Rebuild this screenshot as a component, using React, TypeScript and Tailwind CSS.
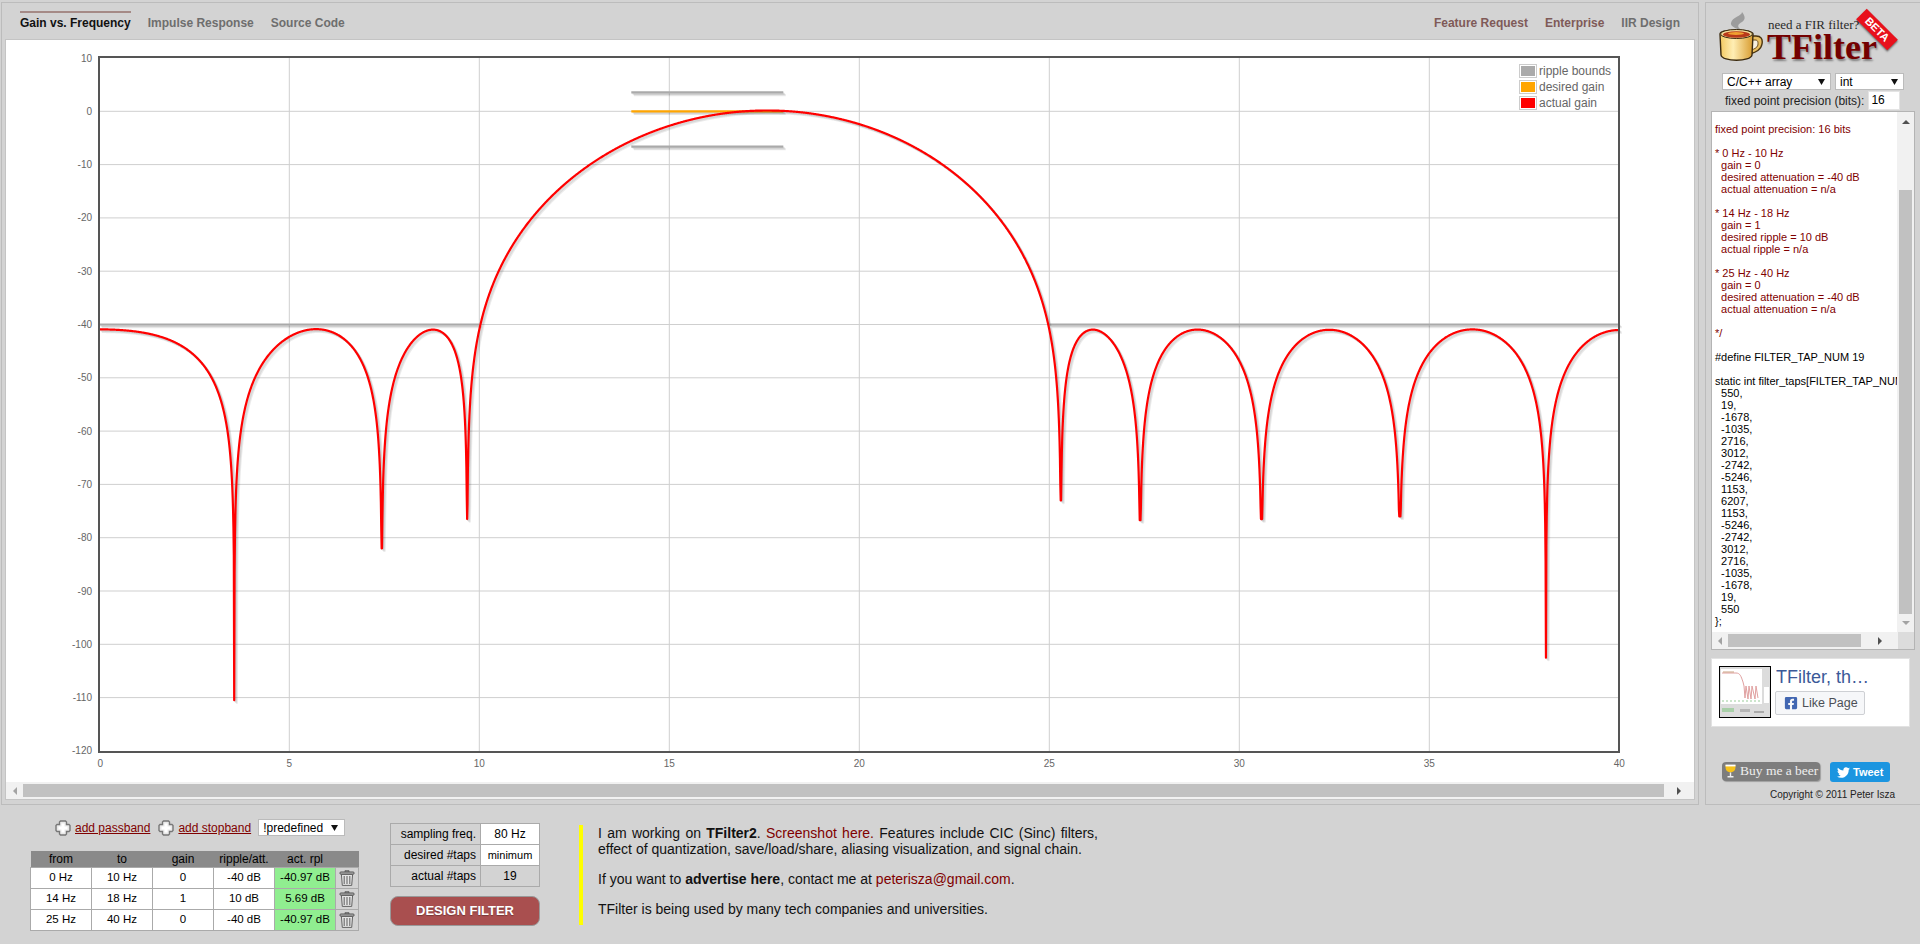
import React from "react";
import { FaTwitter, FaFacebookSquare } from "react-icons/fa";

const TAPS = [550, 19, -1678, -1035, 2716, 3012, -2742, -5246, 1153, 6207, 1153, -5246, -2742, 3012, 2716, -1035, -1678, 19, 550];
const NOTCHES: [number, number][] = [
  [3.57, -110.5], [7.46, -82], [9.67, -76.5], [25.33, -73], [27.4, -76.7], [30.6, -76.5], [34.3, -76], [38.0, -102.5],
];
const X = (f: number) => 99.3 + 38 * f;
const Y = (db: number) => 111.3 - 5.33 * db;

function curve() {
  const dbs: number[] = [];
  for (let i = 0; i <= 4000; i++) {
    const f = i * 0.01;
    let s = 0;
    TAPS.forEach((h, n) => {
      s += h * Math.cos((2 * Math.PI * f * (n - 9)) / 80);
    });
    dbs.push(20 * Math.log10(Math.abs(s) / 32768 + 1e-9));
  }
  NOTCHES.forEach(([nf, nd]) => {
    const c = Math.round(nf * 100);
    let m = c;
    for (let i = c - 30; i <= c + 30; i++) if (dbs[i] < dbs[m]) m = i;
    for (let i = c - 30; i <= c + 30; i++) dbs[i] = Math.max(dbs[i], nd);
    dbs[m] = nd;
  });
  return "M" + dbs.map((d, i) => `${X(i * 0.01).toFixed(2)},${Y(d).toFixed(2)}`).join("L");
}
const CURVE = curve();

const SHADOW = [1, 2, 3];

function Lines({ d, color, w }: { d: string; color: string; w: number }) {
  return (
    <g fill="none" strokeLinejoin="round">
      {SHADOW.map((j) => (
        <path key={j} d={d} stroke="#000" strokeOpacity={0.08} strokeWidth={w} transform={`translate(${0.88 * j} ${0.88 * j})`} />
      ))}
      <path d={d} stroke={color} strokeWidth={w} />
    </g>
  );
}

function Chart() {
  const ys = Array.from({ length: 14 }, (_, i) => 10 - i * 10);
  const xs = Array.from({ length: 9 }, (_, i) => i * 5);
  return (
    <svg viewBox="6 40 1687 742" className="block w-[1687px] h-[742px]">
      <rect x="6" y="40" width="1687" height="742" fill="#fff" />
      {ys.map((v) => (
        <g key={v}>
          {v !== 10 && v !== -120 && <line x1="100" x2="1618" y1={Y(v)} y2={Y(v)} stroke="#cfcfcf" strokeWidth="1" />}
          <text x="92" y={Y(v) + 3.5} textAnchor="end" fontSize="10" fill="#666">{v}</text>
        </g>
      ))}
      {xs.map((v) => (
        <g key={v}>
          {v !== 0 && v !== 40 && <line x1={X(v)} x2={X(v)} y1="58" y2="751" stroke="#cfcfcf" strokeWidth="1" />}
          <text x={X(v) + (v === 0 ? 1 : 0)} y="766.5" textAnchor="middle" fontSize="10" fill="#666">{v}</text>
        </g>
      ))}
      <Lines d={`M${X(0)},${Y(-40)}L${X(10)},${Y(-40)}`} color="#aaa" w={2.2} />
      <Lines d={`M${X(25)},${Y(-40)}L${X(40)},${Y(-40)}`} color="#aaa" w={2.2} />
      <Lines d={`M${X(14)},92.4L${X(18)},92.4`} color="#aaa" w={2.2} />
      <Lines d={`M${X(14)},146.6L${X(18)},146.6`} color="#aaa" w={2.2} />
      <Lines d={`M${X(14)},111.3L${X(18)},111.3`} color="#ffa500" w={2.2} />
      <Lines d={CURVE} color="#f00" w={2.2} />
      <rect x="99" y="57" width="1520" height="695" fill="none" stroke="#555" strokeWidth="2" />
      {[
        ["#aaa", "ripple bounds", 64],
        ["#ffa500", "desired gain", 80],
        ["#f00", "actual gain", 96],
      ].map(([c, t, y]) => (
        <g key={t as string}>
          <rect x="1519.5" y={(y as number) + 0.5} width="17" height="13" fill="#fff" stroke="#ccc" />
          <rect x="1521" y={(y as number) + 2} width="14" height="10" fill={c as string} />
          <text x="1539" y={(y as number) + 11} fontSize="12" fill="#666">{t}</text>
        </g>
      ))}
    </svg>
  );
}

function Tri({ dir, color = "#505050" }: { dir: "l" | "r" | "u" | "d"; color?: string }) {
  const p = { l: "5,0 5,8 1,4", r: "1,0 1,8 5,4", u: "0,5 8,5 4,1", d: "0,1 8,1 4,5" }[dir];
  const box = dir === "l" || dir === "r" ? "w-[6px] h-[8px]" : "w-[8px] h-[6px]";
  const vb = dir === "l" || dir === "r" ? "0 0 6 8" : "0 0 8 6";
  return (
    <svg viewBox={vb} className={box}>
      <polygon points={p} fill={color} />
    </svg>
  );
}

function Caret() {
  return (
    <svg viewBox="0 0 7 6" className="w-[7px] h-[6px] shrink-0">
      <polygon points="0,0 7,0 3.5,6" fill="#111" />
    </svg>
  );
}

function Plus() {
  return (
    <svg viewBox="0 0 16 16" className="w-[16px] h-[16px] shrink-0">
      <path d="M5.5 1h5l1 1v2.5H14l1 1v5l-1 1h-2.500V14l-1 1h-5l-1-1v-2.500H2l-1-1v-5l1-1h2.500V2z" fill="#e8e8e8" stroke="#777" strokeWidth="1.4" />
      <path d="M6.5 3.5h3v3h3v3h-3v3h-3v-3h-3v-3h3z" fill="#fff" />
    </svg>
  );
}

function Trash() {
  return (
    <svg viewBox="0 0 16 16" className="w-[16px] h-[16px]">
      <path d="M6 .6h4v1.6H6z" fill="#aaa" stroke="#555" strokeWidth=".7" />
      <rect x="1" y="2" width="14" height="2.2" rx=".8" fill="#bbb" stroke="#444" strokeWidth=".9" />
      <path d="M2.4 4.4h11.2l-.9 11H3.3z" fill="#e4e4e4" stroke="#555" strokeWidth=".9" />
      <path d="M5.2 6v8M8 6v8M10.8 6v8" stroke="#6a6a6a" strokeWidth="1.1" />
    </svg>
  );
}

function Mug() {
  return (
    <svg viewBox="0 0 44 50" className="w-[44px] h-[50px] shrink-0">
      <defs>
        <linearGradient id="mugb" x1="0" x2="1" y1="0" y2="0">
          <stop offset="0" stopColor="#f2c860" />
          <stop offset=".4" stopColor="#ffeeb4" />
          <stop offset="1" stopColor="#d89c30" />
        </linearGradient>
      </defs>
      <path d="M23 18c-6-3-4-6 0-8 3-2 4-5 0-10 0 4-10 5-11 11-1 3 5 6 11 7z" fill="#9c9c9c" />
      <path d="M31 24h6c5 0 7 3 6 8-1 6-6 8-12 10z" fill="#e9bf62" stroke="#4a3410" strokeWidth="1.4" />
      <path d="M32 28h4c3 0 3 2 3 4 0 3-3 5-7 6z" fill="#f7f0e0" stroke="#6a4a18" strokeWidth="1" />
      <path d="M1 22c0-5 32-5 33 0l-1 21c-1 7-30 7-31 0z" fill="url(#mugb)" stroke="#3a2a10" strokeWidth="1.4" />
      <ellipse cx="17.5" cy="22" rx="16" ry="4.5" fill="#f3dc9a" stroke="#3a2a10" strokeWidth="1" />
      <ellipse cx="17.5" cy="22.5" rx="13.5" ry="3.2" fill="#b8391a" />
      <ellipse cx="17" cy="21.5" rx="8" ry="1.4" fill="#f0a030" />
    </svg>
  );
}

function Beer() {
  return (
    <svg viewBox="0 0 11 15" className="w-[11px] h-[15px] shrink-0">
      <path d="M.5 1h10c0 4 0 6.500-5 7.500-5-1-5-3.500-5-7.500z" fill="#f6c21a" />
      <path d="M.5 .6h10v1.800H.5z" fill="#fff" />
      <path d="M4.800 8.500h1.400v3.500H4.800zM2.500 12h6v1.600h-6z" fill="#eee" />
    </svg>
  );
}

function Thumb() {
  return (
    <svg viewBox="0 0 50 50" className="block w-[52px] h-[52px] border border-black shrink-0">
      <rect width="50" height="50" fill="#dcdcdc" />
      <rect x="1" y="2" width="41" height="35" fill="#fff" />
      <rect x="44" y="20" width="5" height="16" fill="#fff" />
      <path d="M2 6h14c4 0 5 3 7 9l1 4 1 12 1-12 2 13 1-13 2 13 1-13 3 13 1-13 2 12" fill="none" stroke="#e0a0a0" strokeWidth="1" />
      <path d="M3 5h11" stroke="#c9a080" strokeWidth="1" />
      <path d="M2 34h40" stroke="#9c9" strokeWidth="1" strokeDasharray="2 2" />
      <rect x="2" y="41" width="12" height="4" fill="#a8cfa8" />
      <rect x="20" y="42" width="10" height="3" fill="#b5b5b5" />
      <rect x="34" y="44" width="10" height="2" fill="#aaa" />
    </svg>
  );
}

const RED_CODE = `fixed point precision: 16 bits

* 0 Hz - 10 Hz
  gain = 0
  desired attenuation = -40 dB
  actual attenuation = n/a

* 14 Hz - 18 Hz
  gain = 1
  desired ripple = 10 dB
  actual ripple = n/a

* 25 Hz - 40 Hz
  gain = 0
  desired attenuation = -40 dB
  actual attenuation = n/a

*/
`;
const BLACK_CODE = `
#define FILTER_TAP_NUM 19

static int filter_taps[FILTER_TAP_NUM] = {
${TAPS.map((t) => "  " + t).join(",\n")}
};`;

const ROWS = [
  ["0 Hz", "10 Hz", "0", "-40 dB", "-40.97 dB"],
  ["14 Hz", "18 Hz", "1", "10 dB", "5.69 dB"],
  ["25 Hz", "40 Hz", "0", "-40 dB", "-40.97 dB"],
];

export default function App() {
  return (
    <div className="w-[1920px] h-[944px] bg-[#d3d3d3] overflow-hidden font-['Liberation_Sans',Arial,sans-serif] text-black flex flex-col">
      <div className="flex pt-[2px] pl-[1px] h-[805px] shrink-0">
        {/* left panel */}
        <div className="w-[1698px] h-[803px] border border-[#bcbcbc] px-[3px] pb-[4px] flex flex-col">
          <div className="h-[36px] flex justify-between pl-[15px] pr-[15px] pt-[8px] text-[12px] font-bold leading-[20px] shrink-0">
            <div className="flex gap-[17px] items-start">
              <span className="border-t-2 border-[#a58a86] text-[#111]">Gain vs. Frequency</span>
              <span className="border-t-2 border-transparent text-[#6e6e6e]">Impulse Response</span>
              <span className="border-t-2 border-transparent text-[#6e6e6e]">Source Code</span>
            </div>
            <div className="flex gap-[17px] items-start">
              <span className="border-t-2 border-transparent text-[#7f5a58]">Feature Request</span>
              <span className="border-t-2 border-transparent text-[#7f5a58]">Enterprise</span>
              <span className="border-t-2 border-transparent text-[#6e6e6e]">IIR Design</span>
            </div>
          </div>
          <div className="flex-1 border border-[#c4c4c4] bg-white flex flex-col min-h-0">
            <Chart />
            <div className="h-[17px] bg-[#f1f1f1] flex items-center">
              <div className="w-[17px] flex justify-center"><Tri dir="l" color="#a3a3a3" /></div>
              <div className="w-[1641px] h-[13px] bg-[#c1c1c1]" />
              <div className="flex-1 flex justify-center"><Tri dir="r" /></div>
            </div>
          </div>
        </div>

        {/* right panel */}
        <div className="ml-[6px] w-[215px] h-[803px] border-l border-t border-b border-[#bcbcbc] flex flex-col">
          <div className="relative h-[70px] shrink-0 flex pl-[13px] pt-[9px]">
            <Mug />
            <div className="ml-[4px] relative">
              <div className="font-['Liberation_Serif',serif] text-[13px] leading-[14px] text-[#2a2a2a] pl-[1px] pt-[6px] whitespace-nowrap">need a FIR filter?</div>
              <div className="font-['Liberation_Serif',serif] font-bold text-[36px] leading-[30px] text-[#740000] [text-shadow:1px_2px_2px_rgba(0,0,0,0.4)]">TFilter</div>
            </div>
            <div className="absolute left-[149px] top-[19px] w-[44px] h-[15px] bg-[#e8101c] rotate-45 text-white text-[11px] font-bold leading-[15px] text-center shadow-[1px_1px_2px_rgba(0,0,0,0.5)]">BETA</div>
          </div>
          <div className="flex pl-[16px] gap-[4px] text-[12px] shrink-0">
            <div className="w-[109px] h-[17px] bg-white border border-[#bbb] flex items-center justify-between pl-[4px] pr-[5px] leading-none">
              <span>C/C++ array</span><Caret />
            </div>
            <div className="w-[69px] h-[17px] bg-white border border-[#bbb] flex items-center justify-between pl-[4px] pr-[5px] leading-none">
              <span>int</span><Caret />
            </div>
          </div>
          <div className="flex items-center pl-[19px] mt-[1px] h-[19px] text-[12px] shrink-0">
            <span className="text-[#222]">fixed point precision (bits):</span>
            <div className="ml-[4px] w-[32px] h-[19px] bg-white border border-[#e4e4e4] pl-[2px] leading-[17px]">16</div>
          </div>
          <div className="ml-[5px] mt-[1px] w-[204px] h-[539px] border border-[#b4b4b4] bg-white flex flex-col shrink-0">
            <div className="flex flex-1 min-h-0">
              <pre className="w-[186px] overflow-hidden pl-[3px] pt-[11px] text-[11px] leading-[12px] font-['Liberation_Sans',Arial,sans-serif]">
                <span className="text-[#800000]">{RED_CODE}</span>
                <span className="text-black">{BLACK_CODE}</span>
              </pre>
              <div className="w-[17px] bg-[#f1f1f1] flex flex-col items-center">
                <div className="h-[17px] flex items-center pt-[2px]"><Tri dir="u" /></div>
                <div className="h-[61px]" />
                <div className="w-[13px] h-[424px] bg-[#c1c1c1]" />
                <div className="flex-1 flex items-center"><Tri dir="d" color="#a3a3a3" /></div>
              </div>
            </div>
            <div className="h-[17px] flex shrink-0">
              <div className="w-[186px] bg-[#f1f1f1] flex items-center">
                <div className="w-[16px] flex justify-center"><Tri dir="l" color="#a3a3a3" /></div>
                <div className="w-[133px] h-[13px] bg-[#c1c1c1]" />
                <div className="flex-1 flex justify-center"><Tri dir="r" /></div>
              </div>
              <div className="flex-1 bg-[#dcdcdc]" />
            </div>
          </div>
          <div className="ml-[5px] mt-[8px] w-[199px] h-[69px] bg-white border border-[#e2e2e2] flex pl-[7px] pt-[7px] shrink-0">
            <Thumb />
            <div className="ml-[4px] flex flex-col">
              <div className="text-[18px] leading-[22px] text-[#3b5998] pl-[1px]">TFilter, th…</div>
              <div className="mt-[3px] w-[90px] h-[24px] bg-[#f6f7f9] border border-[#ced0d4] rounded-[2px] flex items-center pl-[8px] gap-[4px] text-[12.5px] text-[#4b4f56]">
                <FaFacebookSquare className="text-[#4267b2] text-[14px]" />
                <span>Like Page</span>
              </div>
            </div>
          </div>
          <div className="ml-[16px] mt-[35px] flex gap-[10px] shrink-0">
            <div className="w-[98px] h-[19px] rounded-[4px] bg-[#7d7d7d] shadow-[1px_1px_1px_rgba(0,0,0,0.25)] flex items-center pl-[3px] gap-[4px] font-['Liberation_Serif',serif] text-[13.5px] text-[#eee] whitespace-nowrap">
              <Beer />
              <span>Buy me a beer</span>
            </div>
            <div className="w-[60px] h-[20px] rounded-[3px] bg-[#1b95e0] flex items-center pl-[7px] gap-[3px] text-white text-[11px] font-bold">
              <FaTwitter className="text-[13px]" />
              <span>Tweet</span>
            </div>
          </div>
          <div className="mt-[7px] text-[10px] leading-[12px] text-right pr-[25px] text-[#222]">Copyright © 2011 Peter Isza</div>
        </div>
      </div>

      {/* bottom */}
      <div className="flex flex-1 pl-[30px]">
        <div className="w-[328px] shrink-0">
          <div className="flex items-center pl-[25px] pt-[14px] h-[31px] text-[12px]">
            <Plus />
            <a className="ml-[4px] text-[#800000] underline">add passband</a>
            <span className="ml-[8px]"><Plus /></span>
            <a className="ml-[4px] text-[#800000] underline">add stopband</a>
            <div className="ml-[7px] w-[87px] h-[17px] bg-white border border-[#bbb] flex items-center justify-between pl-[4px] pr-[6px] leading-none">
              <span>!predefined</span><Caret />
            </div>
          </div>
          <table className="mt-[15px] border-collapse table-fixed w-[328px] text-[11.5px] text-center">
            <thead>
              <tr className="h-[16px] bg-[#8a8a8a] leading-[16px] text-[12px]">
                <th className="w-[61px] font-normal">from</th>
                <th className="w-[61px] font-normal">to</th>
                <th className="w-[61px] font-normal">gain</th>
                <th className="w-[61px] font-normal">ripple/att.</th>
                <th className="w-[61px] font-normal">act. rpl</th>
                <th className="w-[23px] font-normal"></th>
              </tr>
            </thead>
            <tbody>
              {ROWS.map((r, i) => (
                <tr key={i} className="h-[21px]">
                  {r.slice(0, 4).map((c, j) => (
                    <td key={j} className="border border-[#aaa] bg-white p-0">{c}</td>
                  ))}
                  <td className="border border-[#aaa] bg-[#90ee90] p-0">{r[4]}</td>
                  <td className="border border-[#aaa] p-0">
                    <div className="flex justify-center"><Trash /></div>
                  </td>
                </tr>
              ))}
            </tbody>
          </table>
        </div>

        <div className="ml-[32px] w-[150px] pt-[18px] shrink-0">
          <table className="border-collapse table-fixed w-[150px] text-[12px]">
            <tbody>
              <tr className="h-[21px]">
                <td className="w-[90px] border border-[#aaa] text-right pr-[4px]">sampling freq.</td>
                <td className="border border-[#aaa] bg-white text-center">80 Hz</td>
              </tr>
              <tr className="h-[21px]">
                <td className="border border-[#aaa] text-right pr-[4px]">desired #taps</td>
                <td className="border border-[#aaa] bg-white text-center text-[11px]">minimum</td>
              </tr>
              <tr className="h-[21px]">
                <td className="border border-[#aaa] text-right pr-[4px]">actual #taps</td>
                <td className="border border-[#aaa] text-center">19</td>
              </tr>
            </tbody>
          </table>
          <div className="mt-[9px] w-[150px] h-[30px] rounded-[8px] bg-[#a94f4f] border border-[#999] flex items-center justify-center text-white font-bold text-[13px] [text-shadow:0_1px_1px_rgba(0,0,0,0.3)]">DESIGN FILTER</div>
        </div>

        <div className="ml-[39px] mt-[20px] w-[519px] h-[100px] border-l-4 border-[#ffff00] pl-[15px] text-[14px] leading-[16px] text-[#111]">
          <p className="text-justify">I am working on <b>TFilter2</b>. <a className="text-[#800000]">Screenshot here.</a> Features include CIC (Sinc) filters, effect of quantization, save/load/share, aliasing visualization, and signal chain.</p>
          <p className="mt-[14px]">If you want to <b>advertise here</b>, contact me at <a className="text-[#800000]">peterisza@gmail.com</a>.</p>
          <p className="mt-[14px]">TFilter is being used by many tech companies and universities.</p>
        </div>
      </div>
    </div>
  );
}
